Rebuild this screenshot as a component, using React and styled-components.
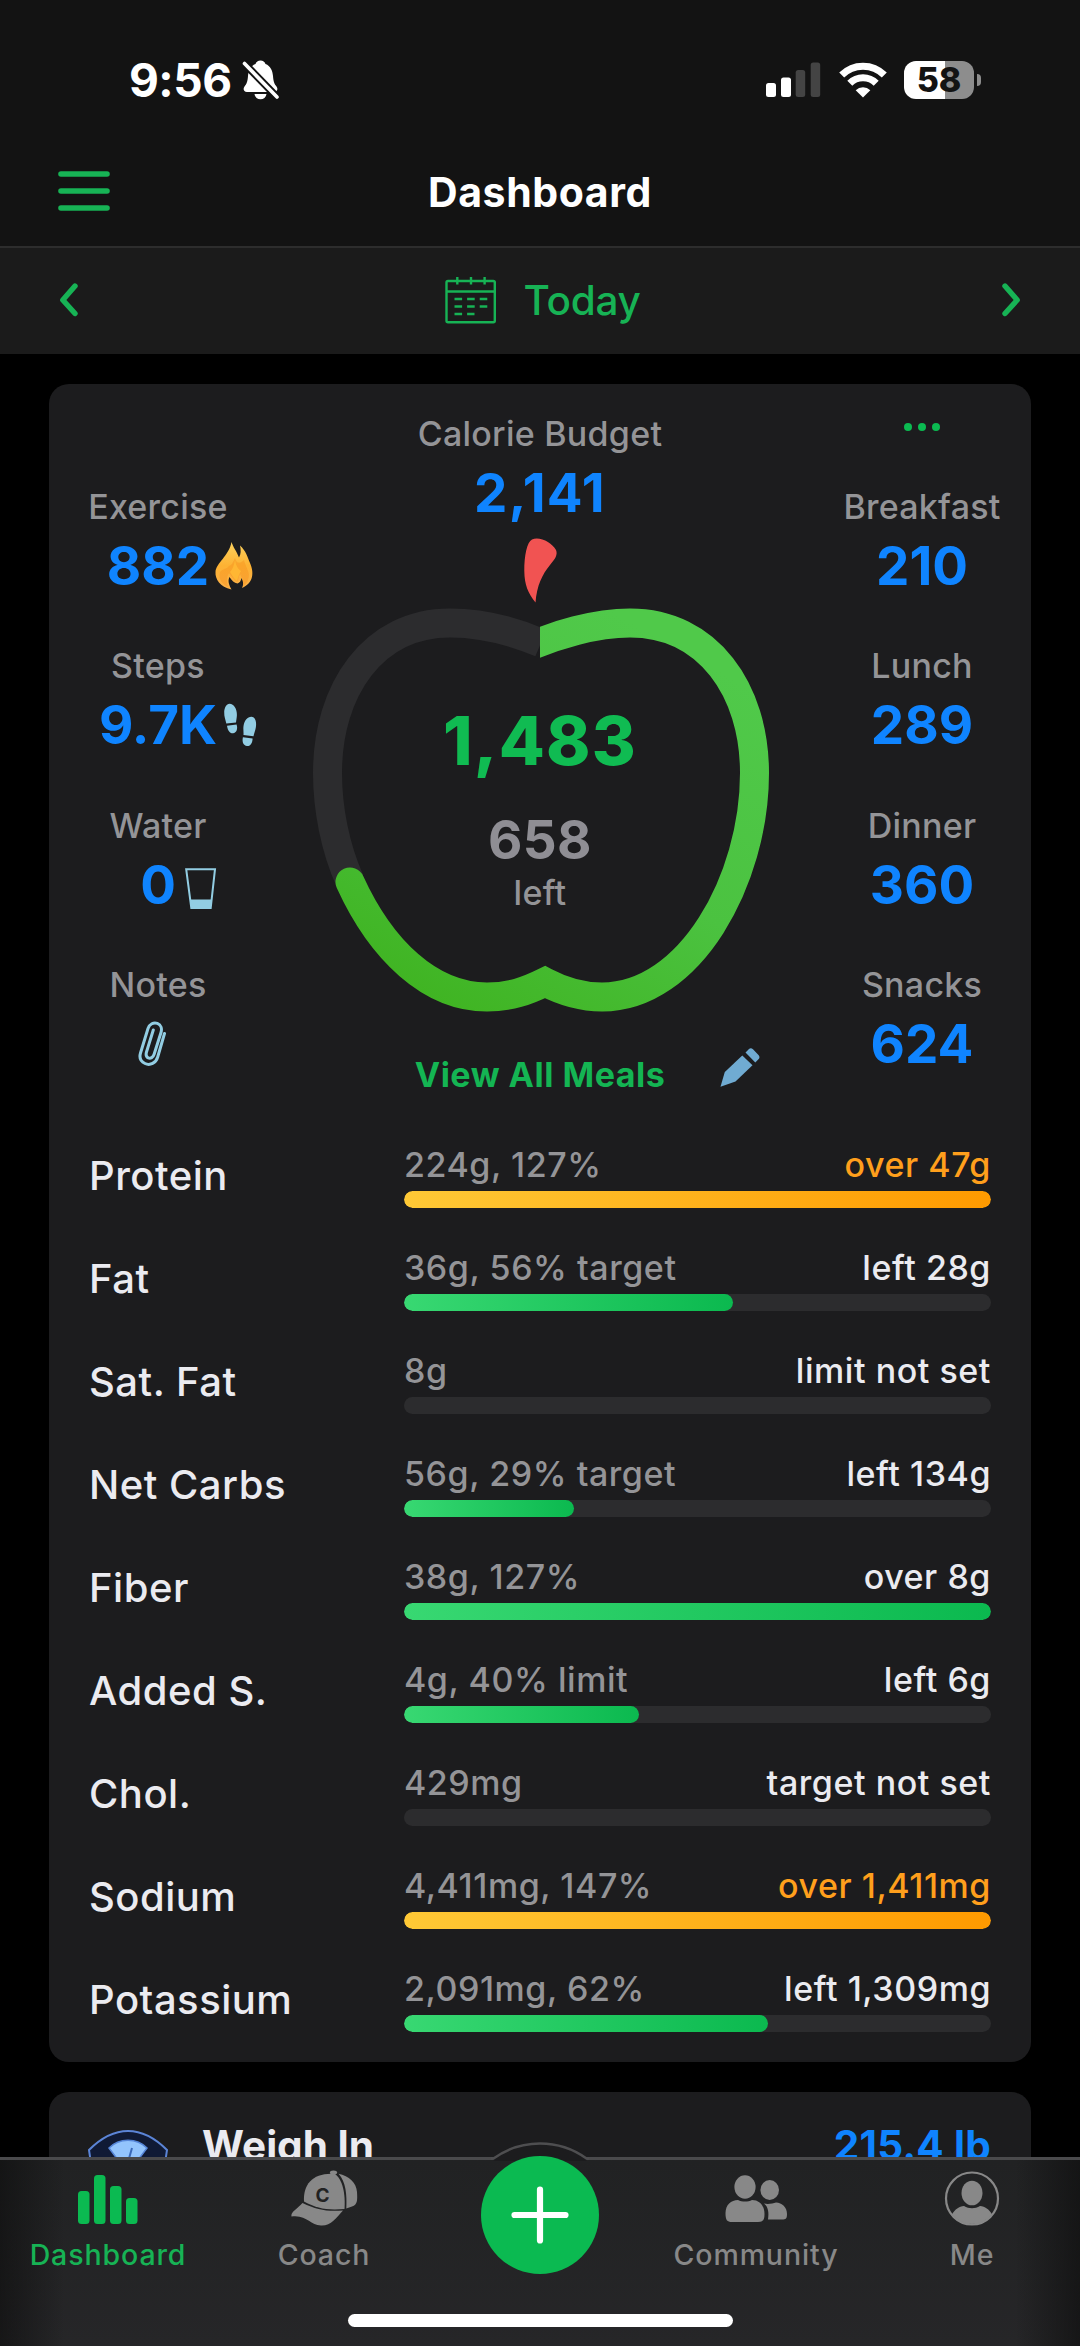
import styled, { createGlobalStyle } from 'styled-components';

const GREEN = '#0bba51';
const GREEN_TEXT = '#17b355';
const BLUE = '#0f84ff';
const GREY = '#949497';
const CARD = '#1c1c1e';
const TRACK = '#2c2c2e';

const fills = {
  green: 'linear-gradient(90deg, #38d872, #0bb94f)',
  orange: 'linear-gradient(90deg, #ffc936, #ff9a00)',
};

const meals = [
  { label: 'Breakfast', value: '210' },
  { label: 'Lunch', value: '289' },
  { label: 'Dinner', value: '360' },
  { label: 'Snacks', value: '624' },
];

const nutrients = [
  { name: 'Protein', eaten: '224g, 127%', rest: 'over 47g', percent: 100, over: true },
  { name: 'Fat', eaten: '36g, 56% target', rest: 'left 28g', percent: 56 },
  { name: 'Sat. Fat', eaten: '8g', rest: 'limit not set', percent: 0 },
  { name: 'Net Carbs', eaten: '56g, 29% target', rest: 'left 134g', percent: 29 },
  { name: 'Fiber', eaten: '38g, 127%', rest: 'over 8g', percent: 100 },
  { name: 'Added S.', eaten: '4g, 40% limit', rest: 'left 6g', percent: 40 },
  { name: 'Chol.', eaten: '429mg', rest: 'target not set', percent: 0 },
  { name: 'Sodium', eaten: '4,411mg, 147%', rest: 'over 1,411mg', percent: 100, over: true },
  { name: 'Potassium', eaten: '2,091mg, 62%', rest: 'left 1,309mg', percent: 62 },
];

function BellOff() {
  return (
    <svg width="38" height="40" viewBox="0 0 38 40">
      <path fill="#fff" d="M18.500 0.500C21 0.500 22.800 2 23.500 4C28.500 6 30.500 10.500 31 16C31.400 22 32.500 24 34.500 26.500C36.200 29 35.500 32 32 32H5C1.500 32 0.800 29 2.500 26.500C4.500 24 5.600 22 6 16C6.500 10.500 8.500 6 13.500 4C14.200 2 16 0.500 18.500 0.500Z" />
      <path fill="#fff" d="M12.500 34H24.500C24 37.500 21.500 39.300 18.500 39.300C15.500 39.300 13 37.500 12.500 34Z" />
      <path stroke="#131313" strokeWidth="7.500" d="M-1 0L38 40" />
      <path stroke="#fff" strokeWidth="3.600" strokeLinecap="round" d="M2.500 3.500L35 37" />
    </svg>
  );
}

function Signal() {
  return (
    <svg width="56" height="36" viewBox="0 0 56 36">
      <rect x="0" y="21" width="10" height="14" rx="2.500" fill="#fff" />
      <rect x="15" y="15.500" width="10" height="19.500" rx="2.500" fill="#fff" />
      <rect x="29.700" y="8" width="9.500" height="27" rx="2.500" fill="#444" />
      <rect x="44.700" y="0.500" width="9.500" height="34.500" rx="2.500" fill="#444" />
    </svg>
  );
}

function Wifi() {
  return (
    <svg width="48" height="36" viewBox="0 0 48 36">
      <g fill="none" stroke="#fff" strokeWidth="7">
        <path d="M2.700 13A30 30 0 0 1 45.300 13" />
        <path d="M10.800 21.300A18.600 18.600 0 0 1 37.200 21.300" />
      </g>
      <path fill="#fff" d="M24 35.500L16.700 28.300A10.300 10.300 0 0 1 31.300 28.300Z" />
    </svg>
  );
}

function Hamburger() {
  return (
    <svg width="56" height="42" viewBox="0 0 56 42">
      <path stroke={GREEN_TEXT} strokeWidth="5.600" strokeLinecap="round" d="M5 4H51M5 21H51M5 38H51" />
    </svg>
  );
}

function Chevron({ flip }) {
  return (
    <svg width="20" height="36" viewBox="0 0 20 36" transform={flip ? 'scale(-1 1)' : undefined}>
      <path fill="none" stroke={GREEN_TEXT} strokeWidth="5.400" strokeLinecap="round" strokeLinejoin="round" d="M17 3L4.800 17L17 30.500" />
    </svg>
  );
}

function Calendar() {
  return (
    <svg width="52" height="48" viewBox="0 0 52 48">
      <g fill="none" stroke={GREEN_TEXT} strokeWidth="2.400">
        <rect x="1.500" y="4" width="48.300" height="41.300" rx="1.500" />
        <path d="M1.500 14.500H50M12.300 0V7.500M26 0V7.500M39.600 0V7.500" />
        <path strokeDasharray="7.600 5" d="M9.500 22H42.500M9.500 29.500H42.500M9.500 37H29.500" />
      </g>
    </svg>
  );
}

function Flame() {
  return (
    <svg width="40" height="50" viewBox="0 0 40 50">
      <defs>
        <linearGradient id="flame" x1="0" y1="0" x2="0" y2="1">
          <stop offset="0" stopColor="#fbd15e" />
          <stop offset="0.5" stopColor="#fdb233" />
          <stop offset="1" stopColor="#fbb04a" />
        </linearGradient>
      </defs>
      <path fill="url(#flame)" d="M17.500 1C19 6 22.500 10 25 16.500C27 13 27 9 26 4.500C32 10 33.500 16 36 22C40 31 40 42 28 47C30 43 29 40 27.500 37C27 40 25.500 42 23.500 42.500C20 42 18 39.500 15.500 36C13.500 40 15 44 17.500 48.500C6 46 1 38 1.500 31C2 22 15 15 17.500 1Z" />
      <path fill="#f7931e" opacity="0.450" d="M21 17C23 24 27 22 30 19C32 28 37 31 34 39C33 42 31 44 29 45C30 41 28 37 26 33C24 36 25 40 23 41C20 39 18 36 15 32C12 37 13 42 14 46C8 43 4 38 6 31C9 27 12 29 15 25C18 24 19 21 21 17Z" />
      <path fill="#ffb733" d="M21 19C22 25 24 28 27 30C25 33 24 37 23 40C20 38 18 34 16 31C19 28 20 24 21 19Z" />
    </svg>
  );
}

function Footprints() {
  return (
    <svg width="34" height="44" viewBox="0 0 34 44">
      <g fill="#92cde3">
        <path d="M5.500 0.700C10 0.700 13 6 12.900 12C12.800 15 12.300 17.200 12 19.500L2.300 20.600C1.700 17 0 14 0.200 9C0.400 4.500 2.500 0.900 5.500 0.700Z" />
        <path d="M3 22.700L12.600 21.600C14 26 12.500 30 9 30.300C5.500 30.500 3.600 27 3 22.700Z" />
        <path d="M27.500 13.700C31.500 14 32.600 19 31.900 24C31.300 28 30 30.500 29.500 33.300L19.500 32C19.700 28.500 19 26 19.600 22.500C20.500 17.500 23.500 13.600 27.500 13.700Z" />
        <path d="M18.900 34.300L28.600 35.500C28.500 40 26.500 43.400 23 43C19.300 42.600 17.900 39 18.900 34.300Z" />
      </g>
    </svg>
  );
}

function Glass() {
  return (
    <svg width="32" height="42" viewBox="0 0 32 42">
      <path fill="none" stroke="#92cde3" strokeWidth="2" d="M1.200 1.200H30L25.700 40H6.300Z" />
      <path fill="#92cde3" d="M5.200 31.500H26.800L25.800 40.800H6.200Z" />
    </svg>
  );
}

function Paperclip() {
  return (
    <svg width="32" height="46" viewBox="0 0 32 46">
      <path fill="none" stroke="#92cde3" strokeWidth="3" strokeLinecap="round" d="M27.500 12.500L20.700 36C19 42 13 45 8 42.500C3.500 40.500 2.200 36.500 3.500 32L11 7.500C12.500 3 16.500 1 20.300 2.300C24 3.800 25.200 7.500 24 11.500L17.200 33C16.200 36.500 13.500 37.800 11.200 36.800C9 35.800 8.800 33.500 9.500 31L16.300 9" />
    </svg>
  );
}

function Pencil() {
  return (
    <svg width="40" height="41" viewBox="0 0 40 41">
      <g fill="#70abd2">
        <path d="M22.300 8.500L32.500 18.200L15.500 34.500L0.500 39.700L4.800 25Z" />
        <path d="M25.500 5.500L29 2Q31 0.500 33 2.300L38.700 8.300Q40.200 10.500 38.700 12L35.300 15.400Z" />
      </g>
    </svg>
  );
}

function Apple() {
  return (
    <svg width="480" height="498" viewBox="300 522 480 498">
      <defs>
        <linearGradient id="apple" x1="0.700" y1="0" x2="0.100" y2="1">
          <stop offset="0" stopColor="#50c94a" />
          <stop offset="0.5" stopColor="#4bc240" />
          <stop offset="1" stopColor="#3fb320" />
        </linearGradient>
        <clipPath id="eaten">
          <path d="M540 590H780V1020H300V820H540Z" />
        </clipPath>
      </defs>
      <path fill="#f15352" d="M532 539.500C540 536 552 543 556 550C558 555 555 559 550 565C542 575 537 585 535.500 602.500C528 593 524.500 585 524.300 571C524.200 556 527 542 532 539.500Z" />
      <path fill="none" stroke={TRACK} strokeWidth="29" d="M350 881C335 848 327.500 808 327.500 773C327.500 690 373 623 450 623C482 623 515 632 541 643" />
      <path
        clipPath="url(#eaten)"
        fill="none"
        stroke="url(#apple)"
        strokeWidth="29"
        strokeLinecap="round"
        d="M520 651C555 634 597 623 630 623C708 623 754.500 690 754.500 773C754.500 880 690 997 602 997C580 997 562 991 545 982C527 991 510 997 487 997C430 997 381 950 350 882"
      />
    </svg>
  );
}

function ScaleIcon() {
  return (
    <svg width="80" height="60" viewBox="0 0 80 60">
      <path fill="#101a35" stroke="#5b84d6" strokeWidth="2" d="M1 20L4 40H76L79 20C66 7 54 1 40 1C26 1 14 7 1 20Z" />
      <path fill="#93c4fd" stroke="#5585d8" strokeWidth="1.500" d="M21 18C31 7.500 49 7.500 59 18L47 34H33Z" />
      <path stroke="#3a68b8" strokeWidth="2" d="M44 18L40 32" />
    </svg>
  );
}

function BarsIcon() {
  return (
    <svg width="60" height="56" viewBox="0 0 60 56" fill={GREEN}>
      <rect x="0" y="21" width="11.500" height="33" rx="3.500" />
      <rect x="16" y="5" width="11.500" height="49" rx="3.500" />
      <rect x="32" y="16" width="11.500" height="38" rx="3.500" />
      <rect x="48" y="28" width="11.500" height="26" rx="3.500" />
    </svg>
  );
}

function CapIcon() {
  return (
    <svg width="67" height="56" viewBox="0 0 67 56">
      <g fill="#888">
        <ellipse cx="42.500" cy="2.600" rx="3.600" ry="2" />
        <path d="M47.500 3.800C58 6 65.500 13 66 22C66.500 30 66.500 35 61 36.500L55.300 38.500C56 25 55 12 47.500 3.800Z" />
        <path d="M13 31.500C12 14 22 2.500 43.500 3.800C52 9 54.500 25 53.500 39C36 40.500 26 38.500 13 31.500Z" />
        <path d="M11.500 33C26 40 36 41.700 52 40.500C45 48 40 56 30 55.500C19 55.500 16 44.500 0.500 46.500C-0.500 42 6 39 11.500 33Z" />
      </g>
      <text x="31.500" y="31.500" textAnchor="middle" fontFamily="Inter" fontWeight="700" fontSize="19" fill="#222">C</text>
    </svg>
  );
}

function PeopleIcon() {
  return (
    <svg width="64" height="56" viewBox="-1 0 64 56" fill="#888">
      <ellipse cx="20" cy="17" rx="10.600" ry="11.800" />
      <path d="M0.500 43C0.500 35 6 30 13 30C17 32 23 32 27 30C34 30 39.500 35 39.500 44C39.500 50 38 52 33 52H7C2 52 0.500 50 0.500 43Z" />
      <ellipse cx="44.700" cy="20" rx="9.300" ry="10" />
      <path d="M39 33.500C43 34.500 48 33.500 51 32.500C57 33 62 37 62 44C62 48.500 61 49.500 57 49.500H43C44 43 43.500 37 39 33.500Z" />
    </svg>
  );
}

function MeIcon() {
  return (
    <svg width="56" height="56" viewBox="0 0 56 56">
      <circle cx="28" cy="28.500" r="26" fill="none" stroke="#888" strokeWidth="2.200" />
      <ellipse cx="28" cy="23" rx="10.500" ry="12.300" fill="#888" />
      <path fill="#888" d="M8 44.500C11 39 15 36.500 20 36C25 39 31 39 36 36C41 36.500 45 39 48 44.500A26 26 0 0 1 8 44.500Z" />
    </svg>
  );
}

function Stat({ label, value, icon, x, y }) {
  return (
    <StatBox>
      <StatLabel>{label}</StatLabel>
      <StatValue>
        {value}
        {icon && <Hang $x={x} $y={y}>{icon}</Hang>}
      </StatValue>
    </StatBox>
  );
}

function Nutrient({ item }) {
  return (
    <NutrientRow>
      <NutrientName>{item.name}</NutrientName>
      <NutrientBody>
        <NutrientText>
          <span>{item.eaten}</span>
          <Rest $over={item.over}>{item.rest}</Rest>
        </NutrientText>
        <Track>
          <Fill $over={item.over} style={{ width: `${item.percent}%` }} />
        </Track>
      </NutrientBody>
    </NutrientRow>
  );
}

function App() {
  return (
    <Page>
      <Global />
      <StatusBar>
        <Clock>9:56</Clock>
        <BellOff />
        <StatusRight>
          <Signal />
          <Wifi />
          <Battery>
            <Charge>58</Charge>
            <Nub />
          </Battery>
        </StatusRight>
      </StatusBar>
      <TitleBar>
        <Hamburger />
        <Title>Dashboard</Title>
      </TitleBar>
      <DateBar>
        <Chevron />
        <DateLabel>
          <Calendar />
          <span>Today</span>
        </DateLabel>
        <Chevron flip />
      </DateBar>

      <Content>
        <Card>
          <Summary>
            <SideColumn>
              <Stat label="Exercise" value="882" icon={<Flame />} x={56} y={5} />
              <Stat label="Steps" value="9.7K" icon={<Footprints />} x={66} y={8} />
              <Stat label="Water" value="0" icon={<Glass />} x={27} y={13} />
              <Stat label="Notes" icon={<Paperclip />} x={-21} y={7} />
            </SideColumn>
            <Middle>
              <StatLabel>Calorie Budget</StatLabel>
              <StatValue $spacing={1.2}>2,141</StatValue>
              <AppleBox>
                <Apple />
                <AppleText>
                  <Eaten>1,483</Eaten>
                  <Left>658</Left>
                  <StatLabel>left</StatLabel>
                </AppleText>
              </AppleBox>
              <ViewRow>
                <ViewAll>View All Meals</ViewAll>
                <Pencil />
              </ViewRow>
            </Middle>
            <SideColumn>
              <Dots>
                <Dot />
                <Dot />
                <Dot />
              </Dots>
              {meals.map((meal) => (
                <Stat key={meal.label} label={meal.label} value={meal.value} />
              ))}
            </SideColumn>
          </Summary>
          <NutrientList>
            {nutrients.map((item) => (
              <Nutrient key={item.name} item={item} />
            ))}
          </NutrientList>
        </Card>
        <WeighCard>
          <ScaleIcon />
          <WeighTitle>Weigh In</WeighTitle>
          <Weight>215.4 lb</Weight>
        </WeighCard>
      </Content>

      <TabBar>
        <Hump width="104" height="20" viewBox="0 0 104 20">
          <path fill={CARD} d="M5.500 17.500A79.600 79.600 0 0 1 98.500 17.500V20H5.500Z" />
          <path fill="none" stroke="#4e4e50" strokeWidth="2.500" d="M3 17.500H5.500A79.600 79.600 0 0 1 98.500 17.500H101" />
        </Hump>
        <Tab $active>
          <BarsIcon />
          <TabLabel>Dashboard</TabLabel>
        </Tab>
        <Tab>
          <CapIcon />
          <TabLabel>Coach</TabLabel>
        </Tab>
        <Tab>
          <AddButton>
            <svg width="60" height="60" viewBox="0 0 60 60">
              <path stroke="#fff" strokeWidth="6.200" strokeLinecap="round" d="M4.500 30H55.500M30 4.500V55.500" />
            </svg>
          </AddButton>
        </Tab>
        <Tab>
          <PeopleIcon />
          <TabLabel>Community</TabLabel>
        </Tab>
        <Tab>
          <MeIcon />
          <TabLabel>Me</TabLabel>
        </Tab>
        <HomeIndicator />
      </TabBar>
    </Page>
  );
}

export default App;

const Global = createGlobalStyle`
  body {
    margin: 0;
    background: #000;
  }
  * {
    box-sizing: border-box;
  }
  svg {
    display: block;
    flex: none;
  }
`;
const Page = styled.div`
  width: 1080px;
  height: 2346px;
  display: flex;
  flex-direction: column;
  overflow: hidden;
  background: #000;
  color: #fff;
  font-family: Inter, 'Liberation Sans', sans-serif;
`;
const StatusBar = styled.div`
  height: 140px;
  padding: 20px 99px 0 129px;
  display: flex;
  align-items: center;
  background: #131313;
`;
const Clock = styled.div`
  font-size: 46px;
  line-height: 50px;
  font-weight: 700;
  letter-spacing: -0.500px;
  margin-right: 10px;
`;
const StatusRight = styled.div`
  margin-left: auto;
  display: flex;
  align-items: center;
  gap: 17px;
`;
const Battery = styled.div`
  display: flex;
  align-items: center;
  gap: 3px;
`;
const Charge = styled.div`
  width: 70px;
  height: 38px;
  border-radius: 12px;
  background: linear-gradient(90deg, #fff 58%, #8d8d8d 58%);
  color: #131313;
  font-size: 34px;
  line-height: 38px;
  font-weight: 800;
  text-align: center;
`;
const Nub = styled.div`
  width: 4px;
  height: 12px;
  border-radius: 0 4px 4px 0;
  background: #8d8d8d;
`;
const TitleBar = styled.div`
  height: 106px;
  padding: 0 56px 2px;
  display: grid;
  grid-template-columns: 1fr auto 1fr;
  align-items: center;
  background: #131313;

  > svg {
    margin-top: -2px;
  }
`;
const Title = styled.div`
  font-size: 41px;
  line-height: 48px;
  font-weight: 700;
  letter-spacing: 0.600px;
`;
const DateBar = styled.div`
  height: 108px;
  padding: 0 58px;
  display: flex;
  align-items: center;
  justify-content: space-between;
  border-top: 2px solid #2d2d2d;
  background: #1b1b1b;
`;
const DateLabel = styled.div`
  display: flex;
  align-items: center;
  gap: 27px;
  padding-left: 5px;
  color: ${GREEN_TEXT};
  font-size: 40.500px;
  line-height: 48px;
  font-weight: 500;
  letter-spacing: -0.300px;
`;
const Content = styled.div`
  flex: 1;
  min-height: 0;
  overflow: hidden;
  padding: 30px 49px 0;
`;
const Card = styled.div`
  height: 1678px;
  border-radius: 20px;
  background: ${CARD};
`;
const Summary = styled.div`
  display: grid;
  grid-template-columns: 218px 1fr 218px;
  height: 761px;
`;
const SideColumn = styled.div`
  position: relative;
  padding-top: 102.500px;
`;
const StatBox = styled.div`
  height: 159.500px;
  display: flex;
  flex-direction: column;
  align-items: center;
`;
const StatLabel = styled.div`
  color: ${GREY};
  font-size: 34px;
  line-height: 40px;
  font-weight: 500;
  letter-spacing: 0.250px;
`;
const StatValue = styled.div`
  position: relative;
  margin-top: 9px;
  min-height: 60px;
  color: ${BLUE};
  font-size: 53px;
  line-height: 60px;
  font-weight: 700;
  letter-spacing: ${(props) => props.$spacing || 0}px;
`;
/* icon beside a value, measured from the middle of the number */
const Hang = styled.div`
  position: absolute;
  left: calc(50% + ${(props) => props.$x}px);
  top: ${(props) => props.$y}px;
`;
const Middle = styled.div`
  display: flex;
  flex-direction: column;
  align-items: center;
  padding-top: 30px;
`;
const AppleBox = styled.div`
  position: relative;
  margin-top: -1px;
`;
const AppleText = styled.div`
  position: absolute;
  inset: 179px 0 auto;
  text-align: center;
`;
const Eaten = styled.div`
  color: #10bb52;
  font-size: 67px;
  line-height: 80px;
  font-weight: 800;
  letter-spacing: 1.200px;
`;
const Left = styled.div`
  margin: 29px 0 3px;
  color: #8f8e94;
  font-size: 53px;
  line-height: 60px;
  font-weight: 700;
  letter-spacing: 0.400px;
`;
const ViewRow = styled.div`
  align-self: stretch;
  display: grid;
  grid-template-columns: 1fr auto 1fr;
  align-items: center;
  gap: 55px;
  margin-top: 35px;

  > :first-child {
    grid-column: 2;
  }

  > svg {
    margin-top: -15px;
  }
`;
const ViewAll = styled.div`
  color: #14b553;
  font-size: 34px;
  line-height: 40px;
  font-weight: 700;
  letter-spacing: 0.500px;
`;
const Dots = styled.div`
  position: absolute;
  top: 39px;
  left: 0;
  right: 0;
  display: flex;
  justify-content: center;
  gap: 6px;
`;
const Dot = styled.div`
  width: 8px;
  height: 8px;
  border-radius: 50%;
  background: ${GREEN};
`;
const NutrientList = styled.div`
  padding: 0 40px;
`;
const NutrientRow = styled.div`
  height: 103px;
  display: grid;
  grid-template-columns: 315px 1fr;
`;
const NutrientName = styled.div`
  margin-top: 7px;
  color: #ebebf0;
  font-size: 40px;
  line-height: 48px;
  font-weight: 500;
  letter-spacing: 0.500px;
`;
const NutrientBody = styled.div`
  display: flex;
  flex-direction: column;
`;
const NutrientText = styled.div`
  display: flex;
  justify-content: space-between;
  color: ${GREY};
  font-size: 34px;
  line-height: 40px;
  font-weight: 500;
  letter-spacing: 0.550px;
`;
const Rest = styled.span`
  color: ${(props) => (props.$over ? '#ff9f1c' : '#ebebf0')};
`;
const Track = styled.div`
  height: 17px;
  margin-top: 6px;
  border-radius: 9px;
  background: ${TRACK};
  overflow: hidden;
`;
const Fill = styled.div`
  height: 100%;
  border-radius: 9px;
  background: ${(props) => (props.$over ? fills.orange : fills.green)};
`;
const WeighCard = styled.div`
  height: 200px;
  margin-top: 30px;
  padding: 38px 40px 0 39px;
  border-radius: 20px;
  display: flex;
  align-items: flex-start;
  background: ${CARD};
  font-size: 40.500px;
  line-height: 48px;
  font-weight: 700;
`;
const WeighTitle = styled.div`
  margin: -8px 0 0 34px;
  color: #ebebf0;
`;
const Weight = styled.div`
  margin: -8px 0 0 auto;
  color: ${BLUE};
  letter-spacing: 0.300px;
`;
const TabBar = styled.div`
  position: relative;
  height: 189px;
  display: flex;
  border-top: 3px solid #4a4a4c;
  background: linear-gradient(90deg, rgba(12, 12, 12, 0.600), transparent 6%, transparent 94%, rgba(12, 12, 12, 0.600)), linear-gradient(#212223, #262628);
`;
const Hump = styled.svg`
  position: absolute;
  left: 488px;
  top: -19px;
`;
const Tab = styled.div`
  position: relative;
  width: 216px;
  padding-top: 10px;
  display: flex;
  flex-direction: column;
  align-items: center;
  color: ${(props) => (props.$active ? GREEN_TEXT : '#888')};
`;
const TabLabel = styled.div`
  margin-top: 11px;
  font-size: 28.500px;
  line-height: 36px;
  font-weight: 500;
  letter-spacing: 0.900px;
`;
const AddButton = styled.div`
  width: 118px;
  height: 118px;
  margin-top: -14px;
  border-radius: 50%;
  display: flex;
  align-items: center;
  justify-content: center;
  background: ${GREEN};
`;
const HomeIndicator = styled.div`
  position: absolute;
  left: 348px;
  bottom: 19px;
  width: 385px;
  height: 13px;
  border-radius: 7px;
  background: #fff;
`;
